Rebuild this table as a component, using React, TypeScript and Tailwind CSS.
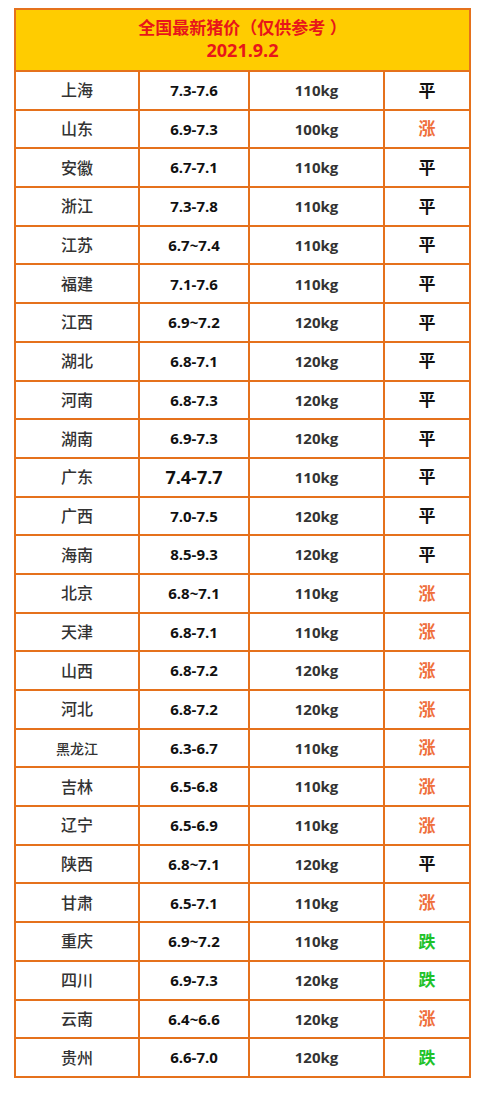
import React from "react";

type Row = { p: string; price: string; w: string; t: "平" | "涨" | "跌"; big?: boolean };

const rows: Row[] = [
  { p: "上海", price: "7.3-7.6", w: "110kg", t: "平" },
  { p: "山东", price: "6.9-7.3", w: "100kg", t: "涨" },
  { p: "安徽", price: "6.7-7.1", w: "110kg", t: "平" },
  { p: "浙江", price: "7.3-7.8", w: "110kg", t: "平" },
  { p: "江苏", price: "6.7~7.4", w: "110kg", t: "平" },
  { p: "福建", price: "7.1-7.6", w: "110kg", t: "平" },
  { p: "江西", price: "6.9~7.2", w: "120kg", t: "平" },
  { p: "湖北", price: "6.8-7.1", w: "120kg", t: "平" },
  { p: "河南", price: "6.8-7.3", w: "120kg", t: "平" },
  { p: "湖南", price: "6.9-7.3", w: "120kg", t: "平" },
  { p: "广东", price: "7.4-7.7", w: "110kg", t: "平", big: true },
  { p: "广西", price: "7.0-7.5", w: "120kg", t: "平" },
  { p: "海南", price: "8.5-9.3", w: "120kg", t: "平" },
  { p: "北京", price: "6.8~7.1", w: "110kg", t: "涨" },
  { p: "天津", price: "6.8-7.1", w: "110kg", t: "涨" },
  { p: "山西", price: "6.8-7.2", w: "120kg", t: "涨" },
  { p: "河北", price: "6.8-7.2", w: "120kg", t: "涨" },
  { p: "黑龙江", price: "6.3-6.7", w: "110kg", t: "涨" },
  { p: "吉林", price: "6.5-6.8", w: "110kg", t: "涨" },
  { p: "辽宁", price: "6.5-6.9", w: "110kg", t: "涨" },
  { p: "陕西", price: "6.8~7.1", w: "120kg", t: "平" },
  { p: "甘肃", price: "6.5-7.1", w: "110kg", t: "涨" },
  { p: "重庆", price: "6.9~7.2", w: "110kg", t: "跌" },
  { p: "四川", price: "6.9-7.3", w: "120kg", t: "跌" },
  { p: "云南", price: "6.4~6.6", w: "120kg", t: "涨" },
  { p: "贵州", price: "6.6-7.0", w: "120kg", t: "跌" },
];

const font = { fontFamily: '"Open Sans", "Noto Sans CJK SC", sans-serif' };

export default function App() {
  return (
    <div className="w-[483px] h-[1111px] bg-white pt-[8px] pl-[14px]" style={font}>
      <table className="w-[455px] border-collapse border-2 border-[#E5711C] table-fixed">
        <colgroup>
          <col className="w-[124px]" />
          <col className="w-[110px]" />
          <col className="w-[135px]" />
          <col className="w-[86px]" />
        </colgroup>
        <thead>
          <tr className="h-[62px]">
            <th
              colSpan={4}
              className="bg-[#FFCC00] border-2 border-[#E5711C] text-[#E8161A] font-bold text-[17px] leading-[23px] text-center pb-[2px]"
            >
              <div>全国最新猪价（仅供参考 ）</div>
              <div className="text-[18px]">2021.9.2</div>
            </th>
          </tr>
        </thead>
        <tbody>
          {rows.map((r) => (
            <tr key={r.p} className="h-[38.7px]">
              <td
                className={`border-2 border-[#E5711C] text-center font-medium text-[#333] ${
                  r.p.length > 2 ? "text-[14px]" : "text-[16px]"
                }`}
              >
                {r.p}
              </td>
              <td
                className={`border-2 border-[#E5711C] text-center font-bold text-[#111] ${
                  r.big ? "text-[18px]" : "text-[15px]"
                }`}
              >
                {r.price}
              </td>
              <td className="border-2 border-[#E5711C] text-center font-bold text-[#333] text-[15px]">
                {r.w}
              </td>
              <td
                className={`border-2 border-[#E5711C] text-center font-bold text-[17px] ${
                  r.t === "平" ? "text-[#111]" : r.t === "涨" ? "text-[#EF6F3C]" : "text-[#1FC22A]"
                }`}
              >
                {r.t}
              </td>
            </tr>
          ))}
        </tbody>
      </table>
    </div>
  );
}
